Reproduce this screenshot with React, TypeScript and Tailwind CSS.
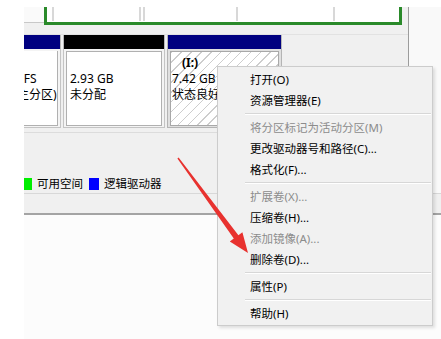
import React from 'react';

type Item = { t?: string; d?: boolean; sep?: boolean };

const items: Item[] = [
  { t: '打开(O)' },
  { t: '资源管理器(E)' },
  { sep: true },
  { t: '将分区标记为活动分区(M)', d: true },
  { t: '更改驱动器号和路径(C)...' },
  { t: '格式化(F)...' },
  { sep: true },
  { t: '扩展卷(X)...', d: true },
  { t: '压缩卷(H)...' },
  { t: '添加镜像(A)...', d: true },
  { t: '删除卷(D)...' },
  { sep: true },
  { t: '属性(P)' },
  { sep: true },
  { t: '帮助(H)' },
];

export default function App() {
  return (
    <div className="relative w-[441px] h-[339px] overflow-hidden bg-white font-['Noto_Sans','Noto_Sans_CJK_SC',sans-serif] text-black">
      {/* top white margin */}
      <div className="h-[7px]" />
      {/* main band */}
      <div className="flex h-[186px]">
        <div className="w-[24px] shrink-0 bg-white" />
        <div className="w-[385px] shrink-0 border-r border-[#9c9c9c] bg-[#f0f0f0] flex flex-col overflow-hidden">
          {/* previous disk row remnant */}
          <div className="flex h-[18px]">
            <div className="w-[20px] h-[16px] bg-[#fafafa] border-b border-[#c8c8c8]" />
            <div className="w-[358px] h-[18px] border-l-[3px] border-r-[3px] border-b-[3px] border-[#2a8a2a] bg-white flex">
              <div className="w-[5px]" />
              <div className="w-[2px] h-[14px] bg-[#d8d8d8]" />
              <div className="w-[85px]" />
              <div className="w-[2px] h-[14px] bg-[#d8d8d8]" />
              <div className="w-[2px]" />
              <div className="w-[2px] h-[14px] bg-[#d8d8d8]" />
              <div className="w-[91px]" />
              <div className="w-[2px] h-[14px] bg-[#d8d8d8]" />
              <div className="w-[95px]" />
              <div className="w-[2px] h-[14px] bg-[#d8d8d8]" />
            </div>
          </div>
          <div className="h-[9px]" />
          <div className="h-[1px] bg-[#e2e2e2]" />
          {/* partition cells */}
          <div className="flex gap-[2px] h-[93px] text-[12px] leading-[16px]">
            {/* clipped first cell */}
            <div className="w-[37px] flex flex-col overflow-hidden">
              <div className="h-[14px] bg-[#000080] border-r border-[#b8b8b8]" />
              <div className="flex-1 bg-[#f4f4f4] border-r border-b border-[#c4c4c4] pt-[2px] pr-[2px] pb-[1px]">
                <div className="h-full bg-white border-r border-b border-[#b0b0b0] pt-[4px] whitespace-nowrap">
                  <div className="h-[16px]" />
                  <div className="ml-[-16px]">NTFS</div>
                  <div className="ml-[-7px]">主分区)</div>
                </div>
              </div>
            </div>
            {/* unallocated */}
            <div className="w-[102px] flex flex-col">
              <div className="h-[14px] bg-black border-x border-[#b8b8b8]" />
              <div className="flex-1 bg-[#f4f4f4] border-x border-b border-[#c4c4c4] pt-[2px] px-[2px] pb-[1px]">
                <div className="h-full bg-white border border-[#b0b0b0] pl-[3px] pt-[3px] whitespace-nowrap">
                  <div className="h-[16px]" />
                  <div>2.93 GB</div>
                  <div>未分配</div>
                </div>
              </div>
            </div>
            {/* selected logical drive */}
            <div className="w-[115px] flex flex-col">
              <div className="h-[14px] bg-[#000080] border-x border-[#b8b8b8]" />
              <div className="flex-1 bg-[#e0e0e0] border-x border-b border-[#b4b4b4] pt-[2px] px-[2px] pb-[1px]">
                <div className="h-full bg-white bg-[repeating-linear-gradient(135deg,#cdcdcd_0px,#cdcdcd_1px,transparent_1px,transparent_7px)] border border-[#a8a8a8] pl-[1px] pt-[3px] whitespace-nowrap">
                  <div className="ml-[10px] font-bold">(I:)</div>
                  <div>7.42 GB</div>
                  <div>状态良好</div>
                </div>
              </div>
            </div>
          </div>
          <div className="h-[4px]" />
          <div className="h-[1px] bg-[#dcdcdc]" />
          {/* legend */}
          <div className="flex-1 flex items-end pb-[3px] text-[11.5px] leading-[12px] whitespace-nowrap">
            <div className="flex items-center ml-[-2px]">
              <div className="w-[10px] h-[12px] bg-[#00ee00]" />
              <span className="ml-[5px]">可用空间</span>
              <div className="ml-[6px] w-[10px] h-[12px] bg-[#0000ff]" />
              <span className="ml-[5px]">逻辑驱动器</span>
            </div>
          </div>
        </div>
        <div className="flex-1 bg-[#f9f9f9]" />
      </div>
      {/* status strip */}
      <div className="ml-[24px] h-[22px] bg-[#f0f0f0] border-t border-[#d8d8d8] border-b-2 border-b-[#a4a4a4]" />
      {/* lower white pane */}
      <div className="ml-[24px] h-[124px] bg-[#fcfcfc]" />

      {/* context menu */}
      <div className="absolute left-[217px] top-[66px] w-[216px] border border-[#cccccc] bg-[#f1f1f1] pt-[2px] pb-[1px] shadow-[2px_2px_3px_rgba(0,0,0,0.12)] text-[11.5px]">
        {items.map((it, i) =>
          it.sep ? (
            <div key={i} className="h-[6px] flex flex-col justify-center ml-[27px] mr-[1px]">
              <div className="h-[1px] bg-[#d7d7d7]" />
              <div className="h-[1px] bg-white" />
            </div>
          ) : (
            <div
              key={i}
              className={
                'h-[21px] flex items-center pl-[32px] whitespace-nowrap ' +
                (it.d ? 'text-[#8c8c8c]' : 'text-black')
              }
            >
              {it.t}
            </div>
          )
        )}
      </div>

      {/* red annotation arrow */}
      <svg className="absolute left-0 top-0 pointer-events-none" width="441" height="339" viewBox="0 0 441 339">
        <polygon
          points="177.4,158.4 233.8,238.6 229.8,241.6 248,253 242.4,232.3 238.4,235.2 178.6,157.6"
          fill="#e8322f"
        />
      </svg>
    </div>
  );
}
